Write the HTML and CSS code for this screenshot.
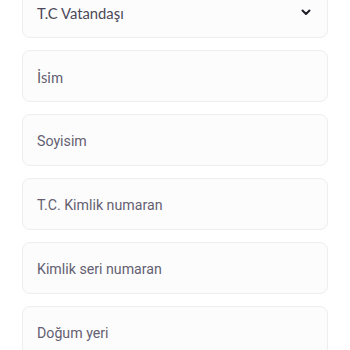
FILE: index.html
```html
<!DOCTYPE html>
<html lang="tr">
<head>
<meta charset="utf-8">
<link rel="stylesheet" href="styles.css">
</head>
<body>
<div class="form">
  <div class="field select geo">
    <span class="label dark">T.C Vatandaşı</span>
    <svg class="chev" width="10" height="7" viewBox="0 0 10 7"><path d="M1.5 1.5 L5 5 L8.5 1.5" fill="none" stroke="#1f1d26" stroke-width="2" stroke-linecap="round" stroke-linejoin="round"/></svg>
  </div>
  <div class="field geo"><span class="label">İsim</span></div>
  <div class="field"><span class="label">Soyisim</span></div>
  <div class="field"><span class="label">T.C. Kimlik numaran</span></div>
  <div class="field"><span class="label">Kimlik seri numaran</span></div>
  <div class="field"><span class="label">Doğum yeri</span></div>
</div>
</body>
</html>
```
FILE: styles.css
```css
html, body { margin: 0; padding: 0; background: #ffffff; }
body { width: 350px; height: 350px; overflow: hidden; }
.form {
  display: flex;
  flex-direction: column;
  gap: 12px;
  margin-top: -14px;
  padding: 0 22px;
}
.field {
  height: 52px;
  box-sizing: border-box;
  border: 1px solid #eeeef1;
  border-radius: 8px;
  background: #fcfcfd;
  display: flex;
  align-items: center;
  justify-content: space-between;
  padding: 1px 14px 0 14px;
  font-family: Roboto, "Liberation Sans", sans-serif;
  font-size: 14.2px;
  font-weight: 400;
  color: #645f71;
}
.geo { font-family: Lato, "Noto Sans", sans-serif; font-size: 14.8px; }
.label.dark { color: #4b4857; }
.chev { margin-right: 2px; }
```
